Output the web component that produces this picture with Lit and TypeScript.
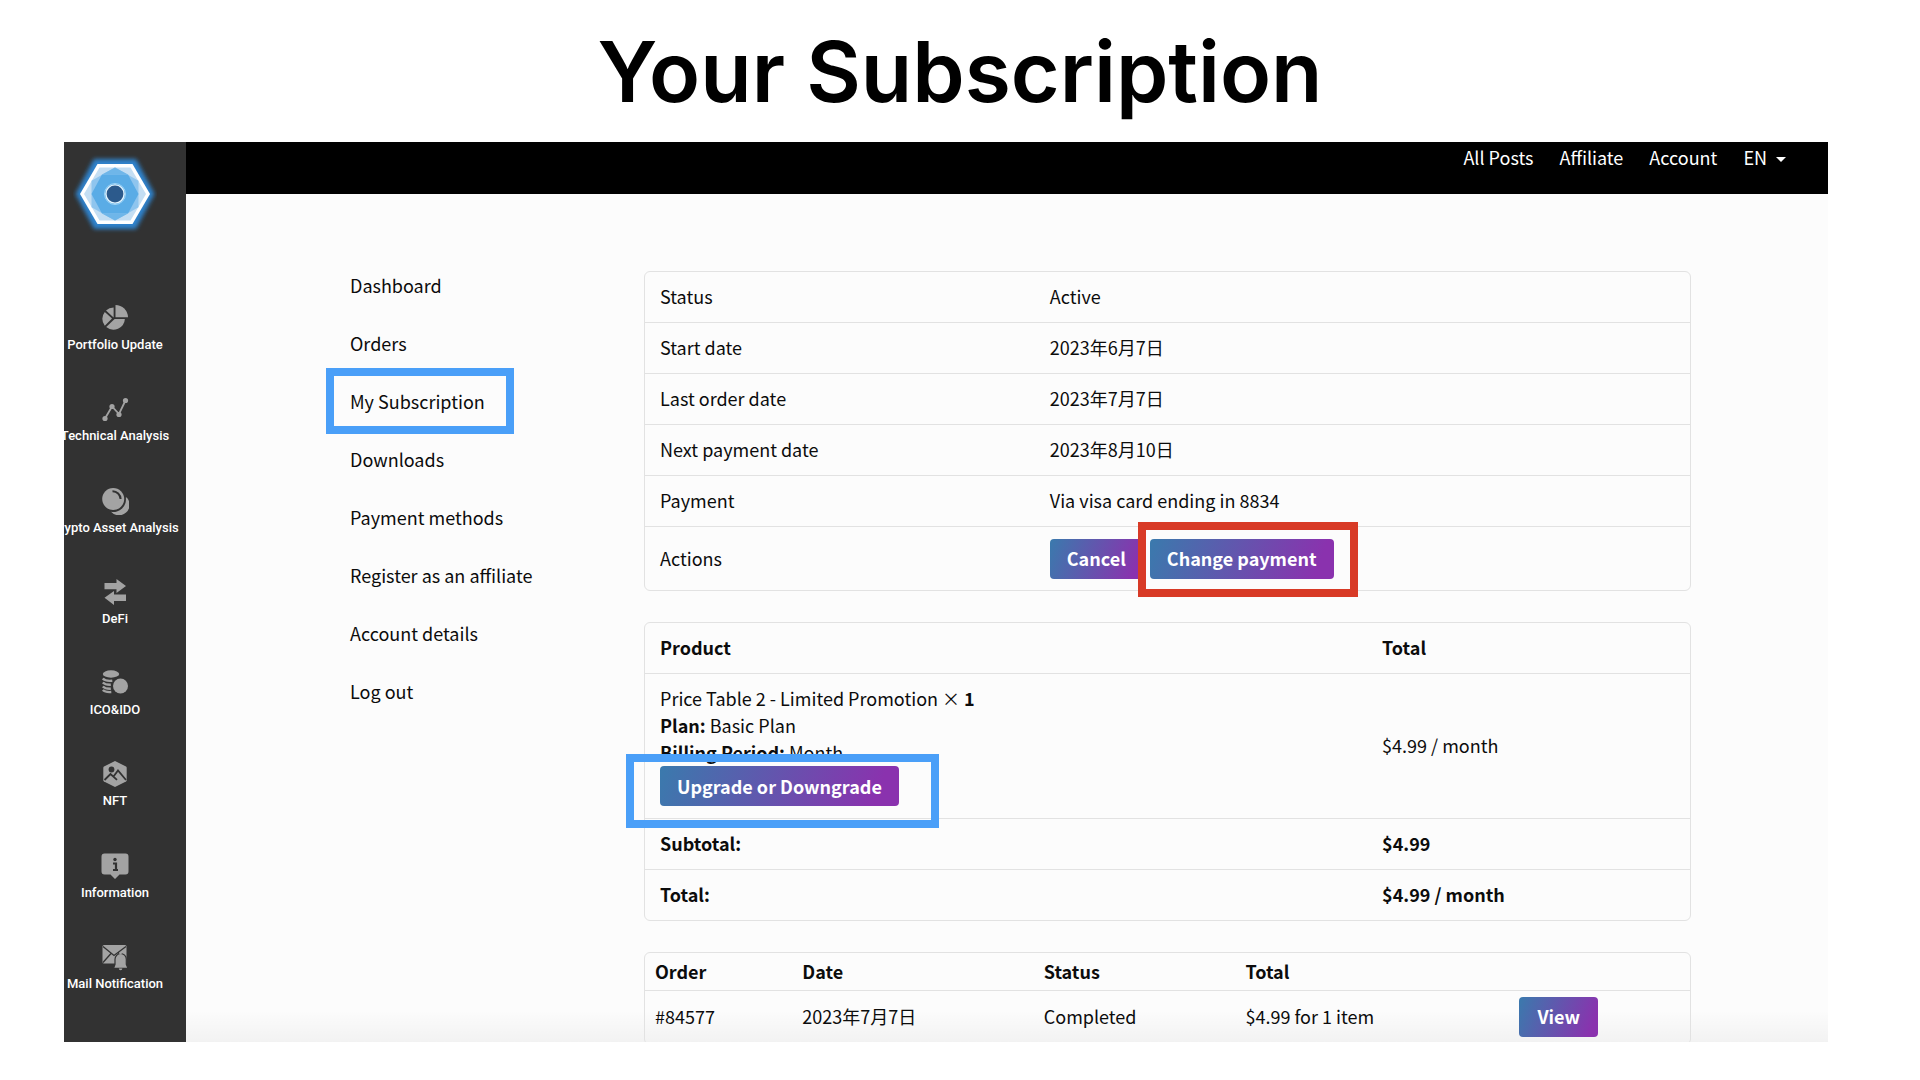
import { LitElement, html, css, svg } from "lit";
import { customElement } from "lit/decorators.js";

const BG = "#323232";

const icons = {
  pie: svg`<path d="M14.5 1v12.300H27A12.500 12.500 0 0 0 14.500 1z"/>
    <path d="M12.600 3.500v10L5 6.500a11 11 0 0 1 7.600-3z"/>
    <path d="M3.800 7.900 11 14.500 3.800 21.800a11 11 0 0 1 0-13.900z"/>
    <path d="M5.200 23.100 13.600 15h10.300A11.500 11.500 0 0 1 5.200 23.100z"/>`,
  chart: svg`<path d="M4 23.500 11 11.500 18 19 24.500 5.500" fill="none" stroke="#a3a3a3" stroke-width="1.800"/>
    <circle cx="4" cy="23.500" r="2.600"/><circle cx="11" cy="11.500" r="2.600"/><circle cx="18" cy="19.500" r="2.600"/><circle cx="24.500" cy="5.500" r="2.600"/>`,
  coin: svg`<path d="M25.800 10.500a10.400 10.400 0 1 1-15.800 14.300 12.600 12.600 0 0 0 14.800-14.300z"/>
    <circle cx="12.200" cy="12" r="11"/>
    <path d="M11.500 4.200A8 8 0 0 1 19.600 12" fill="none" stroke=${BG} stroke-width="2"/>`,
  swap: svg`<path d="M3.500 5h12V1l9.500 7-9.500 7v-3.800h-12z"/><path d="M25 16.500H13V13l-9.500 6.700L13 27v-4h12z"/>`,
  stack: svg`<ellipse cx="10" cy="5" rx="8.200" ry="3.700"/>
    <g fill="none" stroke="#a3a3a3" stroke-width="2.400"><path d="M1.800 9.500c2 2.200 6 2.600 9.500 2.200"/><path d="M1.800 13.500c2 2 5 2.300 8 2.200"/><path d="M1.800 17.500c2 2 5 2.300 8 2.200"/><path d="M1.800 21c2 2 5 2.300 8.500 2"/></g>
    <circle cx="19.500" cy="17" r="8.800" fill=${BG}/><circle cx="19.500" cy="17" r="7.500"/>`,
  nft: svg`<path d="M14 1 25 6.500q.7.500.7 1.300v12.400q0 .8-.7 1.300L14 27 3 21.500q-.7-.5-.7-1.300V7.800q0-.8.700-1.300z"/>
    <circle cx="10.500" cy="9.500" r="2.900" fill=${BG}/>
    <path d="M3.500 20 9.500 14 16 19.800M12.500 16.500 17 10.500 25 20" fill="none" stroke=${BG} stroke-width="1.800"/>`,
  info: svg`<path d="M3.500 1.500h21q3 0 3 3v15q0 3-3 3h-6L14 27l-4.500-4.500h-6q-3 0-3-3v-15q0-3 3-3z"/>
    <circle cx="14" cy="7.500" r="1.700" fill=${BG}/><path d="M12 11.500h3v7M12 18h5" fill="none" stroke=${BG} stroke-width="2.200"/>`,
  mail: svg`<rect x="1.500" y="2" width="24" height="18.500" rx="1.500"/>
    <path d="M2 3.500 13 12.500 25 3.500M2 19.500 10 10.500M25 16 17 9.500" fill="none" stroke=${BG} stroke-width="1.300"/>
    <path d="M19.500 10.500a5.800 5.800 0 0 1 5.800 5.800v5l1.700 4H12.500l1.500-4v-5a5.800 5.800 0 0 1 5.500-5.800z" stroke=${BG} stroke-width="1.200"/>
    <circle cx="19.500" cy="10.500" r="1.200"/><path d="M17.800 25.500h3.600a1.800 1.800 0 0 1-3.600 0z"/>`,
};

const sideItems: [keyof typeof icons, string][] = [
  ["pie", "Portfolio Update"],
  ["chart", "Technical Analysis"],
  ["coin", "Crypto Asset Analysis"],
  ["swap", "DeFi"],
  ["stack", "ICO&IDO"],
  ["nft", "NFT"],
  ["info", "Information"],
  ["mail", "Mail Notification"],
];

const menu = ["Dashboard", "Orders", "My Subscription", "Downloads", "Payment methods", "Register as an affiliate", "Account details", "Log out"];

const details = [
  ["Status", "Active"],
  ["Start date", "2023年6月7日"],
  ["Last order date", "2023年7月7日"],
  ["Next payment date", "2023年8月10日"],
  ["Payment", "Via visa card ending in 8834"],
];

@customElement("app-sidebar")
export class AppSidebar extends LitElement {
  static styles = css`
    :host { display: flex; flex-direction: column; background: #323232; overflow: hidden; padding: 10px 0 50px; box-sizing: border-box; font: 500 13px/16px Roboto, sans-serif; }
    .inner { display: flex; flex-direction: column; flex: 1; margin-left: -20px; align-items: center; }
    .logo { display: block; height: 84px; margin-bottom: 68px; }
    .list { display: flex; flex-direction: column; justify-content: space-between; flex: 1; list-style: none; margin: 0; padding: 0; }
    .link { display: flex; flex-direction: column; align-items: center; gap: 5px; color: #fff; text-decoration: none; white-space: nowrap; }
    .icon { width: 28px; height: 28px; fill: #a3a3a3; }
  `;
  render() {
    return html`<nav class="inner" aria-label="Sections">
      <a class="logo" href="#" aria-label="Home">
        <svg width="84" height="84" viewBox="0 0 84 84">
          <defs><filter id="glow" x="-30%" y="-30%" width="160%" height="160%"><feGaussianBlur stdDeviation="2.200"/></filter></defs>
          <path d="M21 7h42L81.500 42 63 77H21L2.500 42z" fill="#2f82cc" filter="url(#glow)"/>
          <path d="M24.500 12h35L77 42 59.500 72h-35L7 42z" fill="#fff"/>
          <path d="M26.500 15.500h31L73 42 57.500 68.500h-31L11 42z" fill="#c4def3"/>
          <path d="M42 15.500 65.500 28.700v26.600L42 68.500 18.500 55.300V28.700z" fill="#8fc5ee"/>
          <path d="M29 22.500h26L65.500 42 55 61.500H29L18.500 42z" fill="#5aace6"/>
          <path d="M42 15.500 55 22.500H29zM42 68.500 55 61.500H29z" fill="#6fb6e9"/>
          <circle cx="42" cy="42" r="9.800" fill="#e4f5ff"/><circle cx="42" cy="42" r="10.500" fill="none" stroke="#9fd4f6"/>
          <circle cx="42" cy="42" r="8.400" fill="#2c5a8c"/>
        </svg>
      </a>
      <ul class="list">
        ${sideItems.map(([icon, label]) => html`<li><a class="link" href="#"><svg class="icon" viewBox="0 0 28 28" aria-hidden="true">${icons[icon]}</svg><span>${label}</span></a></li>`)}
      </ul>
    </nav>`;
  }
}

@customElement("app-root")
export class AppRoot extends LitElement {
  static styles = css`
    :host { display: block; background: #fff; color: #0c0c0c; font: 18px/27px "Noto Sans CJK JP", sans-serif; }
    .page { display: flex; flex-direction: column; height: 100vh; box-sizing: border-box; padding: 2px 92px 38px 64px; overflow: hidden; }
    .title { margin: 0; text-align: center; font: 600 84px/140px Inter, sans-serif; color: #000; padding-left: 28px; flex: none; }
    .frame { display: grid; grid-template-columns: 122px 1fr; flex: 1; min-height: 0; background: #fcfcfc; overflow: hidden; }
    .main { display: flex; flex-direction: column; min-width: 0; overflow: hidden; }
    .bar { display: flex; justify-content: flex-end; align-items: flex-start; gap: 26px; box-sizing: border-box; height: 52px; flex: none; padding: 2px 42px 0; background: #000; }
    .bar a, .bar button { color: #fff; text-decoration: none; }
    .lang { display: flex; align-items: center; gap: 9px; border: 0; padding: 0; background: none; font: inherit; }
    .caret { border: 5px solid transparent; border-top-color: #fff; border-bottom: 0; margin-top: 4px; }
    .body { display: grid; grid-template-columns: 294px 1fr; align-items: start; flex: 1; min-height: 0; padding: 0 137px 0 164px; background: linear-gradient(transparent, #0000000a) bottom / 100% 32px no-repeat; }
    .menu { list-style: none; margin: 0; padding: 62px 0 0; }
    .menu a { position: relative; display: inline-block; line-height: 58px; color: inherit; text-decoration: none; white-space: nowrap; }
    .menu li { display: flex; }
    .content { display: flex; flex-direction: column; gap: 31px; padding-top: 77px; }
    table { width: 100%; table-layout: fixed; border: 1px solid #e2e2e2; border-radius: 6px; border-collapse: separate; border-spacing: 0; }
    th, td { box-sizing: border-box; height: 51px; padding: 0 15px 2px; text-align: left; font-weight: 400; border-bottom: 1px solid #e2e2e2; }
    tr:last-child > .end { border-bottom: 0; height: 50px; }
    .strong { font-weight: 700; }
    .key { width: 37.3%; }
    tr:last-child > .actions { height: 63px; padding-bottom: 0; }
    .row { display: flex; gap: 7px; }
    .product { width: 69.1%; }
    .item { padding: 11px 15px 12px; }
    .btn { position: relative; box-sizing: border-box; height: 40px; min-width: 79px; border: 0; border-radius: 4px; padding: 0 17px; font: inherit; font-weight: 700; color: #fff; background: linear-gradient(110deg, #3a7aad, #8a32ae 90%); white-space: nowrap; }
    .btn.block { display: block; }
    .orders th, .orders td { height: 38px; padding: 0 10px; }
    .orders td { height: 53px; padding-bottom: 1px; }
    .c1 { width: 14.1%; } .c2 { width: 23.1%; } .c3 { width: 19.3%; } .c4 { width: 26.2%; }
    .mark { position: absolute; border: 8px solid #4a9ff8; pointer-events: none; z-index: 1; }
    .mark-menu { inset: -4px -29px -4px -24px; }
    .mark-plan { inset: -12px -40px -22px -34px; }
    .mark-pay { inset: -17px -24px -18px -12px; border-color: #d83a26; }
  `;
  render() {
    return html`<div class="page">
      <h1 class="title">Your Subscription</h1>
      <div class="frame">
        <app-sidebar></app-sidebar>
        <div class="main">
          <header class="bar">
            <a href="#">All Posts</a><a href="#">Affiliate</a><a href="#">Account</a>
            <button class="lang" type="button" aria-haspopup="true">EN<span class="caret"></span></button>
          </header>
          <div class="body">
            <ul class="menu">
              ${menu.map((m) => html`<li><a href="#">${m}${m === "My Subscription" ? html`<span class="mark mark-menu"></span>` : ""}</a></li>`)}
            </ul>
            <div class="content">
              <table>
                ${details.map(([k, v]) => html`<tr><th class="key" scope="row">${k}</th><td>${v}</td></tr>`)}
                <tr><th class="actions end" scope="row">Actions</th><td class="actions end"><div class="row">
                  <button class="btn" type="button">Cancel</button>
                  <button class="btn" type="button">Change payment<span class="mark mark-pay"></span></button>
                </div></td></tr>
              </table>
              <table>
                <thead><tr><th class="product strong" scope="col">Product</th><th class="strong" scope="col">Total</th></tr></thead>
                <tbody>
                  <tr><td class="item">Price Table 2 - Limited Promotion × <b>1</b><br /><b>Plan:</b> Basic Plan<br /><b>Billing Period:</b> Month
                    <button class="btn block" type="button">Upgrade or Downgrade<span class="mark mark-plan"></span></button></td><td>$4.99 / month</td></tr>
                  <tr><th class="strong" scope="row">Subtotal:</th><td class="strong">$4.99</td></tr>
                  <tr><th class="strong end" scope="row">Total:</th><td class="strong end">$4.99 / month</td></tr>
                </tbody>
              </table>
              <table class="orders">
                <thead><tr><th class="c1 strong" scope="col">Order</th><th class="c2 strong" scope="col">Date</th><th class="c3 strong" scope="col">Status</th><th class="c4 strong" scope="col">Total</th><th></th></tr></thead>
                <tbody><tr><td>#84577</td><td>2023年7月7日</td><td>Completed</td><td>$4.99 for 1 item</td><td><button class="btn" type="button">View</button></td></tr></tbody>
              </table>
            </div>
          </div>
        </div>
      </div>
    </div>`;
  }
}
